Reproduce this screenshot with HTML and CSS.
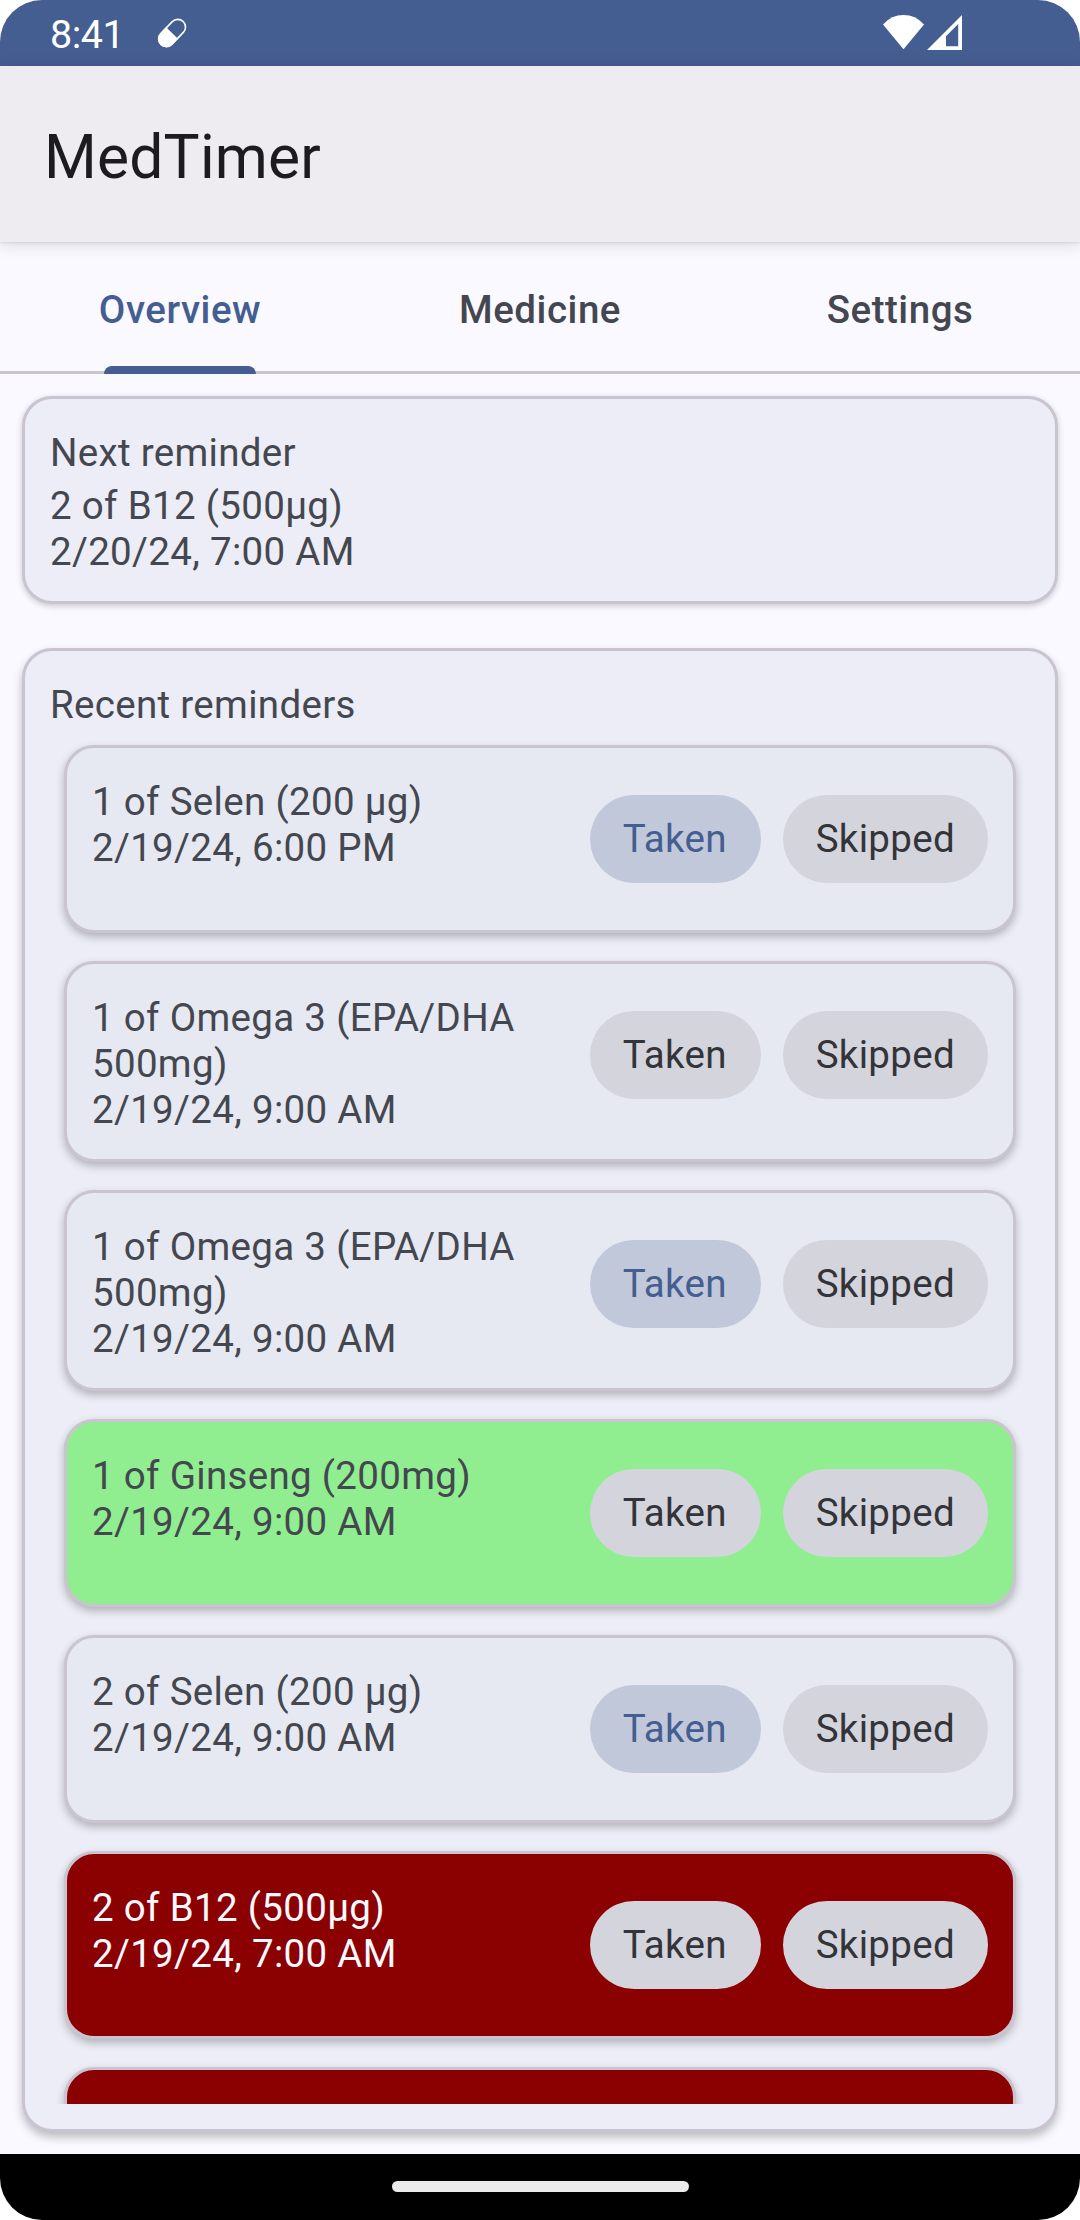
FILE: index.html
```html
<!DOCTYPE html>
<html lang="en">
<head>
<meta charset="utf-8">
<title>MedTimer</title>
<link rel="stylesheet" href="styles.css">
</head>
<body>
<div class="screen">
  <div class="status-bar">
    <span class="clock">8:41</span>
    <svg class="pill-icon" width="30" height="31" viewBox="0 0 30 31">
      <g transform="translate(15.05 15) rotate(-46)">
        <rect x="-16" y="-7.7" width="32" height="15.4" rx="7.7" fill="none" stroke="#fff" stroke-width="1.6"/>
        <path d="M0-8.2V8.2H-8.5A8.2 8.2 0 0 1-8.5-8.2Z" fill="#fff"/>
      </g>
    </svg>
    <div class="signals">
      <svg width="41" height="35" viewBox="0 0 41 35"><path d="M0 9.4Q8.500 0 20.500 0T41 9.400L20.500 34.300Z" fill="#fff"/></svg>
      <svg width="35" height="35" viewBox="0 0 35 35"><path fill-rule="evenodd" d="M35 0V35H0ZM31.200 9L19 21.200V31.200H31.200Z" fill="#fff"/></svg>
    </div>
  </div>

  <header class="app-bar"><h1 class="app-title">MedTimer</h1></header>

  <nav class="tabs">
    <div class="tab tab-active">Overview</div>
    <div class="tab">Medicine</div>
    <div class="tab">Settings</div>
  </nav>

  <main class="content">
    <section class="card card-next">
      <h2 class="card-heading">Next reminder</h2>
      <p class="next-text">2 of B12 (500µg)<br>2/20/24, 7:00 AM</p>
    </section>

    <section class="card card-recent">
      <h2 class="card-heading">Recent reminders</h2>
      <div class="reminders">
        <article class="reminder">
          <p class="reminder-text">1 of Selen (200 µg)<br>2/19/24, 6:00 PM</p>
          <div class="chips"><span class="chip chip-on">Taken</span><span class="chip">Skipped</span></div>
        </article>
        <article class="reminder">
          <p class="reminder-text">1 of Omega 3 (EPA/DHA 500mg)<br>2/19/24, 9:00 AM</p>
          <div class="chips"><span class="chip">Taken</span><span class="chip">Skipped</span></div>
        </article>
        <article class="reminder">
          <p class="reminder-text">1 of Omega 3 (EPA/DHA 500mg)<br>2/19/24, 9:00 AM</p>
          <div class="chips"><span class="chip chip-on">Taken</span><span class="chip">Skipped</span></div>
        </article>
        <article class="reminder reminder-green">
          <p class="reminder-text">1 of Ginseng (200mg)<br>2/19/24, 9:00 AM</p>
          <div class="chips"><span class="chip">Taken</span><span class="chip">Skipped</span></div>
        </article>
        <article class="reminder">
          <p class="reminder-text">2 of Selen (200 µg)<br>2/19/24, 9:00 AM</p>
          <div class="chips"><span class="chip chip-on">Taken</span><span class="chip">Skipped</span></div>
        </article>
        <article class="reminder reminder-red">
          <p class="reminder-text">2 of B12 (500µg)<br>2/19/24, 7:00 AM</p>
          <div class="chips"><span class="chip">Taken</span><span class="chip">Skipped</span></div>
        </article>
        <article class="reminder reminder-red"></article>
      </div>
    </section>
  </main>

  <footer class="nav-bar"><div class="home-handle"></div></footer>
</div>
</body>
</html>
```
FILE: styles.css
```css
* { box-sizing: border-box; margin: 0; }

body {
  background: #fff;
  font-family: Roboto, sans-serif;
  font-size: 38.5px;
  line-height: 46px;
  letter-spacing: 0.32px;
  color: #44474f;
}

.screen {
  display: flex;
  flex-direction: column;
  width: 1080px;
  height: 2220px;
  border-radius: 42px;
  overflow: hidden;
  background: #faf9ff;
}

/* System status bar */
.status-bar {
  flex: none;
  display: flex;
  align-items: flex-start;
  height: 66px;
  padding: 0 118px 0 50px;
  background: #455e91;
}

.clock {
  width: 107px;
  padding-top: 12px;
  font-size: 39.5px;
  letter-spacing: -0.5px;
  color: #fff;
}

.pill-icon { margin-top: 18px; }

.signals {
  display: flex;
  gap: 3px;
  margin: 15px 0 0 auto;
}

.app-bar {
  flex: none;
  display: flex;
  align-items: center;
  position: relative;
  height: 176px;
  padding: 7px 44px 0;
  background: #eeecf1;
  box-shadow: 0 3px 16px rgba(0, 0, 0, 0.12), 0 1px 3px rgba(0, 0, 0, 0.1);
}

.app-title {
  font-size: 60.5px;
  font-weight: 400;
  line-height: 72px;
  letter-spacing: 0.2px;
  color: #1b1b20;
}

/* Tabs */
.tabs {
  flex: none;
  display: grid;
  grid-template-columns: repeat(3, 1fr);
  height: 132px;
  border-bottom: 3px solid #cac4d0;
}

.tab {
  position: relative;
  padding-top: 45px;
  font-weight: 500;
  letter-spacing: 0.53px;
  text-align: center;
}

.tab-active { color: #455e91; }

.tab-active::after {
  content: "";
  position: absolute;
  left: 104px;
  bottom: -3px;
  width: 152px;
  height: 8px;
  border-radius: 8px 8px 0 0;
  background: #455e91;
}

/* Cards */
.content {
  flex: 1;
  min-height: 0;
  display: flex;
  flex-direction: column;
  gap: 44px;
  padding: 22px;
}

.card {
  border: 3px solid #cac4d0;
  border-radius: 30px;
  background: #ecedf6;
  box-shadow: 0 2px 6px rgba(0, 0, 0, 0.2);
}

.card-heading {
  padding: 31px 25px 0;
  font-size: inherit;
  font-weight: 400;
}

.card-next { flex: none; height: 208px; }

.next-text { padding: 7px 25px 0; }

.card-recent {
  flex: 1;
  min-height: 0;
  display: flex;
  flex-direction: column;
  padding-bottom: 25px;
  box-shadow: 0 5px 10px rgba(0, 0, 0, 0.26);
}

.reminders {
  flex: 1;
  min-height: 0;
  display: flex;
  flex-direction: column;
  gap: 28px;
  padding: 17px 39px 0;
  overflow: hidden;
}

.reminder {
  flex: none;
  display: flex;
  justify-content: space-between;
  align-items: flex-start;
  min-height: 188px;
  padding: 31px 25px 26px;
  border: 3px solid #cac4d0;
  border-radius: 30px;
  background: #e6e9f2;
  box-shadow: 0 4px 9px rgba(0, 0, 0, 0.25);
}

.reminder-green { background: #90ee90; }
.reminder-red { background: #8b0000; color: #faf9ff; }

.reminder-text { width: 450px; }

.chips {
  display: flex;
  gap: 22px;
  padding-top: 16px;
}

.chip {
  min-width: 171px;
  height: 88px;
  padding: 21px 33px;
  border-radius: 44px;
  background: #d4d4dc;
  color: #333439;
}

.chip-on { background: #c1c8da; color: #455e91; }

/* Gesture navigation */
.nav-bar {
  flex: none;
  display: flex;
  justify-content: center;
  height: 66px;
  padding-top: 27px;
  background: #000;
}

.home-handle {
  width: 297px;
  height: 11px;
  border-radius: 6px;
  background: #ebebeb;
}
```
